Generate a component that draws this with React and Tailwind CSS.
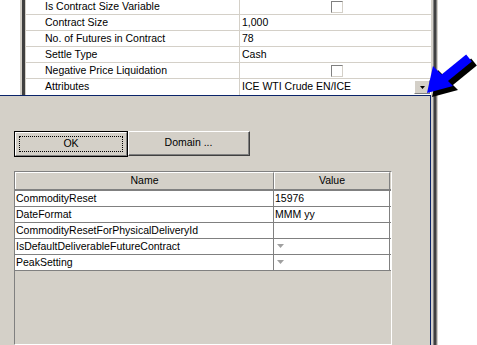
import React from "react";

const font = { fontFamily: '"Liberation Sans", Arial, sans-serif' };

function TopRow({ label, children, first, last }) {
  return (
    <div
      className={`flex ${first ? "h-[15px]" : "h-[16px]"} ${last ? "" : "border-b border-[#d4d0c8]"}`}
    >
      <div className="w-[214px] shrink-0 border-r border-[#d4d0c8] pl-[19px] flex items-center text-[10.5px] text-black">
        {label}
      </div>
      <div className="flex-1 flex items-center pl-[2px] text-[10.5px] text-black">{children}</div>
    </div>
  );
}

function Checkbox() {
  return (
    <div className="w-full flex justify-center">
      <div className="w-[12px] h-[12px] border border-t-[#808080] border-l-[#808080] border-b-[#d4d0c8] border-r-[#d4d0c8] bg-white" />
    </div>
  );
}

function GridRow({ name, value, arrow }) {
  return (
    <div className="flex h-[16px] bg-white border-b border-[#808080]">
      <div className="w-[259px] shrink-0 border-r border-[#808080] pl-[1px] flex items-center text-[10.5px] text-black">
        {name}
      </div>
      <div className="w-[116px] shrink-0 border-r border-[#808080] pl-[1px] flex items-center text-[10.5px] text-black">
        {value}
        {arrow && (
          <svg width="8" height="5" className="ml-[2px]">
            <polygon points="0,0 7,0 3.5,4" fill="#a0a0a0" />
          </svg>
        )}
      </div>
    </div>
  );
}

export default function App() {
  return (
    <div className="w-[477px] h-[345px] relative overflow-hidden bg-white flex" style={font}>
      {/* Left area: property grid + dialog */}
      <div className="w-[431px] shrink-0 flex flex-col">
        <div className="h-[95px] flex shrink-0">
          <div className="w-[20px] bg-white" />
          <div className="w-[2px] bg-[#d4d0c8]" />
          <div className="w-[3px] bg-[#404040]" />
          <div className="w-[1px] bg-[#d4d0c8]" />
          <div className="flex-1 flex flex-col bg-white">
            <TopRow label="Is Contract Size Variable" first>
              <Checkbox />
            </TopRow>
            <TopRow label="Contract Size">1,000</TopRow>
            <TopRow label="No. of Futures in Contract">78</TopRow>
            <TopRow label="Settle Type">Cash</TopRow>
            <TopRow label="Negative Price Liquidation">
              <Checkbox />
            </TopRow>
            <TopRow label="Attributes" last>
              <span className="flex-1">ICE WTI Crude EN/ICE</span>
              <div className="w-[16px] h-[14px] mr-[1px] bg-[#d4d0c8] border border-t-white border-l-white border-b-[#808080] border-r-[#808080] flex items-center justify-center">
                <svg width="5" height="3">
                  <polygon points="0,0 5,0 2.5,3" fill="#000" />
                </svg>
              </div>
            </TopRow>
          </div>
        </div>

        {/* Dialog */}
        <div className="flex-1 bg-[#d4d0c8] border-t border-r border-[#0a246a] flex flex-col pl-[14px]">
          <div className="flex mt-[35px]">
            <div className="w-[114px] h-[26px] border border-black">
              <div className="w-full h-full border border-t-white border-l-white border-b-[#808080] border-r-[#808080] flex items-center justify-center p-[3px]">
                <div className="w-full h-full border border-dotted border-black flex items-center justify-center text-[10.5px] text-black">
                  OK
                </div>
              </div>
            </div>
            <div className="w-[122px] h-[25px] ml-[0px] border border-t-white border-l-white border-b-[#404040] border-r-[#404040]">
              <div className="w-full h-full border-b border-r border-[#808080] flex items-center justify-center text-[10.5px] text-black">
                Domain ...
              </div>
            </div>
          </div>

          <div className="mt-[14px] w-[378px] flex-1 border border-t-[#808080] border-l-[#808080] border-b-white border-r-white flex flex-col">
            <div className="flex h-[19px] border-b-2 border-[#808080]">
              <div className="w-[259px] shrink-0 border-t border-l border-white border-r border-r-[#808080] bg-[#d4d0c8] flex items-center justify-center text-[10.5px] text-black">
                Name
              </div>
              <div className="w-[116px] shrink-0 border-t border-l border-white border-r border-r-[#808080] bg-[#d4d0c8] flex items-center justify-center text-[10.5px] text-black">
                Value
              </div>
            </div>
            <GridRow name="CommodityReset" value="15976" />
            <GridRow name="DateFormat" value="MMM yy" />
            <GridRow name="CommodityResetForPhysicalDeliveryId" value="" />
            <GridRow name="IsDefaultDeliverableFutureContract" value="" arrow />
            <GridRow name="PeakSetting" value="" arrow />
          </div>
        </div>
      </div>

      {/* Right splitter bars */}
      <div className="w-[2px] bg-[#d4d0c8]" />
      <div className="w-[1px] bg-[#808080]" />
      <div className="w-[2px] bg-[#404040]" />
      <div className="w-[1px] bg-[#808080]" />
      <div className="w-[1px] bg-[#d4d0c8]" />
      <div className="flex-1 bg-white" />

      {/* Pointer arrow */}
      <svg className="absolute left-0 top-0 pointer-events-none" width="477" height="345">
        <g transform="translate(5,4)">
          <line x1="469" y1="58" x2="442" y2="80" stroke="#000" strokeWidth="9" />
          <polygon points="427,93 433,66 453,86" fill="#000" />
        </g>
        <line x1="469" y1="58" x2="442" y2="80" stroke="#0000ff" strokeWidth="9" />
        <polygon points="427,93 433,66 453,86" fill="#0000ff" />
      </svg>
    </div>
  );
}
